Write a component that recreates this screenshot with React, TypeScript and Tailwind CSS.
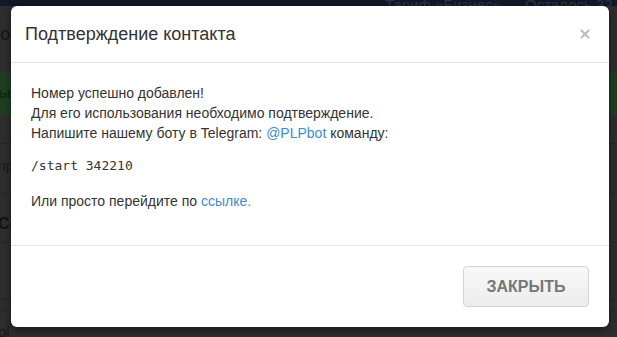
import { X } from "lucide-react"

const sans = { fontFamily: '"Liberation Sans", Arial, sans-serif' }

function BackgroundPage() {
  return (
    <div className="h-[337px] w-[617px] overflow-hidden bg-[#2e2e2e] text-[#1a1a1a]" style={sans}>
      {/* dim top bar */}
      <div className="flex h-[6px] items-end overflow-hidden whitespace-nowrap bg-[#0f1a26] pl-[385px] text-[15px] leading-[15px] text-[#2a3644]">
        <span className="w-[140px] shrink-0 translate-y-[6px]">Тариф «Бизнес»</span>
        <span className="shrink-0 translate-y-[6px]">Осталось 32 дня</span>
      </div>
      <div className="flex h-[56px] items-center text-[18px] text-[#161616]">
        <span className="-ml-[6px]">го</span>
      </div>
      <div className="mt-[10px] flex h-[43px] items-center bg-[#1f3f24] text-[15px] font-bold text-[#0f2a12]">
        <span className="-ml-[2px]">ы</span>
      </div>
      <div className="h-[28px]" />
      <div className="border-t border-[#262626] pt-[12px] text-[14px] text-[#1c1c1c]">
        <span className="-ml-[2px]">пр</span>
      </div>
      <div className="mt-[16px] border-t border-[#262626] pt-[18px] text-[16px] font-bold text-[#141414]">
        <span className="-ml-[2px]">Со</span>
      </div>
      <div className="mt-[6px] border-t border-[#262626]" />
      <div className="mt-[56px] border-t border-[#262626]" />
      <div className="mt-[10px] border-t border-[#262626] pt-[10px] text-[15px] text-[#181818]">
        <span className="-ml-[2px]">ol</span>
      </div>
    </div>
  )
}

export default function App() {
  return (
    <div className="relative h-[337px] w-[617px] overflow-hidden">
      <BackgroundPage />

      {/* Modal */}
      <div className="absolute left-[11px] top-[6px] flex w-[598px] flex-col rounded-[6px] bg-white shadow-[0_3px_9px_rgba(0,0,0,0.5)]" style={sans}>
        <div className="flex items-center justify-between border-b border-[#e5e5e5] pl-[14px] pr-[17px] pt-[15px] pb-[15px]">
          <h4 className="text-[18px] leading-[26px] text-[#333]">Подтверждение контакта</h4>
          <X size={14} strokeWidth={3.6} className="text-[#bdbdbd]" />
        </div>

        <div className="px-[20px] pt-[20px] pb-[34px] text-[14px] leading-[20px] text-[#333]">
          <p>
            Номер успешно добавлен!
            <br />
            Для его использования необходимо подтверждение.
            <br />
            Напишите нашему боту в Telegram: <a className="text-[#428bca]">@PLPbot</a> команду:
          </p>
          <p
            className="mt-[13px] text-[13px] leading-[20px] text-[#333]"
            style={{ fontFamily: '"DejaVu Sans Mono", "Liberation Mono", monospace' }}
          >
            /start 342210
          </p>
          <p className="mt-[15px]">
            Или просто перейдите по <a className="text-[#428bca]">ссылке.</a>
          </p>
        </div>

        <div className="flex justify-end border-t border-[#e5e5e5] p-[20px]">
          <button className="h-[41px] w-[126px] rounded-[4px] border border-[#d4d4d4] bg-gradient-to-b from-[#f8f8f8] to-[#ececec] text-[16px] font-bold text-[#777]">
            ЗАКРЫТЬ
          </button>
        </div>
      </div>
    </div>
  )
}
